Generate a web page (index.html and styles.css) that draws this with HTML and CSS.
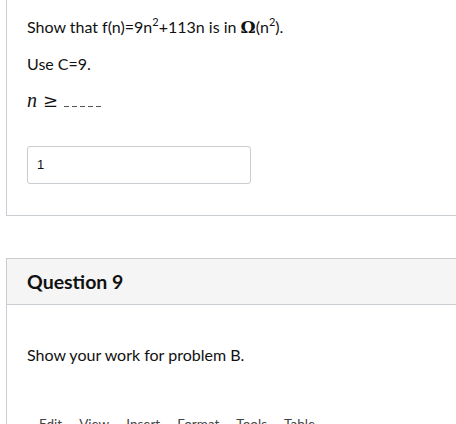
FILE: index.html
```html
<!DOCTYPE html>
<html>
<head>
<meta charset="utf-8">
<link rel="stylesheet" href="styles.css">
</head>
<body>
<div class="card first">
  <div class="text">
    <p class="line">Show that f(n)=9n<sup>2</sup>+113n is in <span class="omega">Ω</span>(n<sup>2</sup>).</p>
    <p class="line">Use C=9.</p>
    <p class="math"><span class="var">n</span><span class="geq">≥</span><span class="blank"></span></p>
    <div class="input">1</div>
  </div>
</div>
<div class="card second">
  <div class="header"><h2>Question 9</h2></div>
  <div class="body">
    <p class="line">Show your work for problem B.</p>
    <div class="menubar">
      <span>Edit</span><span>View</span><span>Insert</span><span>Format</span><span>Tools</span><span>Table</span>
    </div>
  </div>
</div>
</body>
</html>
```
FILE: styles.css
```css
html, body {
  margin: 0;
  padding: 0;
  background: #fff;
}
body {
  font-family: Lato, "Noto Sans", sans-serif;
  color: #2d3b45;
  overflow: hidden;
  height: 424px;
}
.card {
  margin-left: 6px;
  border-left: 1px solid #c7cdd1;
}
.first {
  border-bottom: 1px solid #c7cdd1;
  padding: 17px 0 31px 20px;
}
.line {
  margin: 0;
  font-size: 16px;
  line-height: 20px;
  color: #111;
}
.first .line + .line {
  margin-top: 17px;
}
sup {
  font-size: 11px;
  line-height: 0;
  vertical-align: 7px;
}
.omega {
  font-family: "DejaVu Serif", serif;
  font-weight: bold;
  font-size: 17px;
}
.math {
  margin: 15px 0 0 0;
  height: 22px;
  display: flex;
  align-items: baseline;
  color: #111;
}
.var {
  font-style: italic;
  font-family: "Liberation Serif", serif;
  font-size: 20px;
}
.geq {
  font-family: "DejaVu Serif", serif;
  font-size: 18px;
  margin-left: 6px;
}
.blank {
  display: inline-block;
  width: 38px;
  height: 1px;
  margin-left: 6px;
  background: repeating-linear-gradient(90deg, #555 0 5px, transparent 5px 8px);
}
.input {
  margin-top: 35px;
  width: 213px;
  height: 36px;
  border: 1px solid #c7cdd1;
  border-radius: 3px;
  padding-left: 9px;
  font-family: "Liberation Sans", sans-serif;
  font-size: 13px;
  line-height: 36px;
  color: #111;
}
.second {
  margin-top: 42px;
  border-top: 1px solid #c7cdd1;
}
.header {
  background: #f5f5f5;
  border-bottom: 1px solid #c7cdd1;
  height: 45px;
  padding-left: 20px;
  display: flex;
  align-items: center;
}
.header h2 {
  margin: 0;
  font-size: 19.5px;
  font-weight: bold;
  color: #111;
}
.body {
  padding: 40px 0 0 20px;
}
.menubar {
  margin-top: 51px;
  padding-left: 12px;
  display: flex;
  gap: 17px;
  font-size: 13.5px;
  line-height: 16px;
  color: #444;
}
```
